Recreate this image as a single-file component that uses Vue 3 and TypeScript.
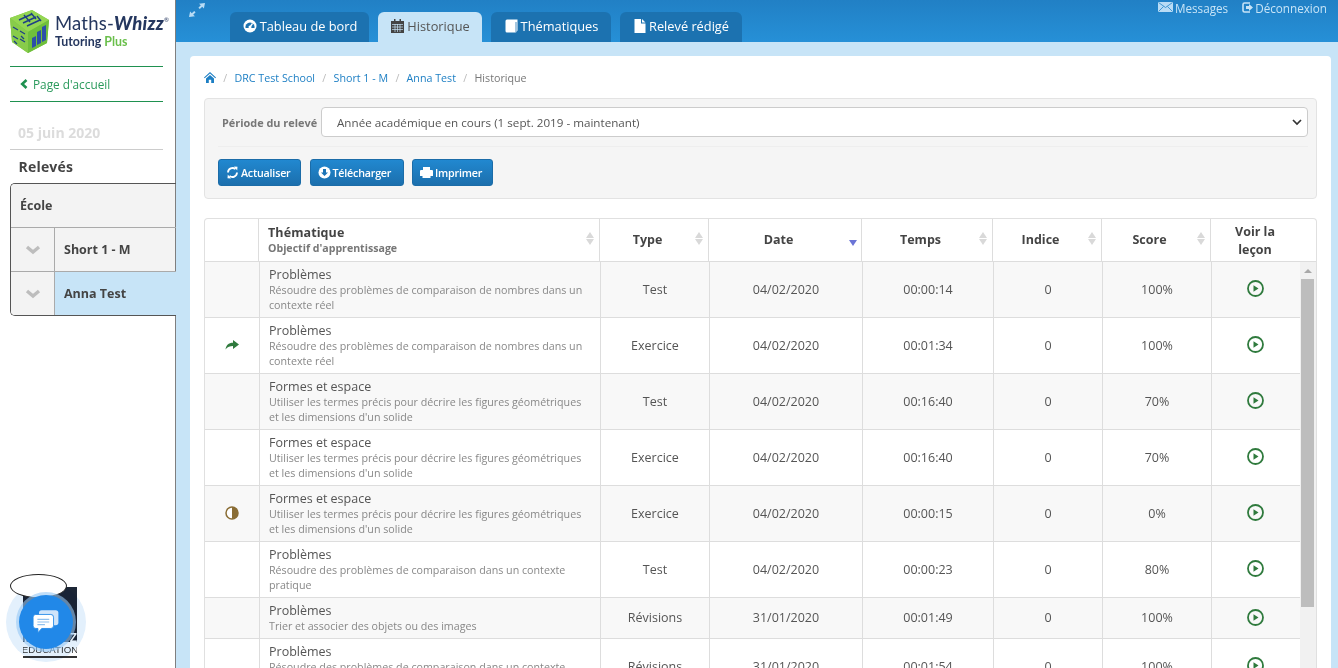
<script setup lang="ts">
interface Row {
  title: string
  desc: string
  type: string
  date: string
  time: string
  score: string
  mark?: 'arrow' | 'half'
  short?: boolean
}

const probA = 'Résoudre des problèmes de comparaison de nombres dans un contexte réel'
const formes = 'Utiliser les termes précis pour décrire les figures géométriques et les dimensions d\'un solide'
const probB = 'Résoudre des problèmes de comparaison dans un contexte pratique'

const rows: Row[] = [
  { title: 'Problèmes', desc: probA, type: 'Test', date: '04/02/2020', time: '00:00:14', score: '100%' },
  { title: 'Problèmes', desc: probA, type: 'Exercice', date: '04/02/2020', time: '00:01:34', score: '100%', mark: 'arrow' },
  { title: 'Formes et espace', desc: formes, type: 'Test', date: '04/02/2020', time: '00:16:40', score: '70%' },
  { title: 'Formes et espace', desc: formes, type: 'Exercice', date: '04/02/2020', time: '00:16:40', score: '70%' },
  { title: 'Formes et espace', desc: formes, type: 'Exercice', date: '04/02/2020', time: '00:00:15', score: '0%', mark: 'half' },
  { title: 'Problèmes', desc: probB, type: 'Test', date: '04/02/2020', time: '00:00:23', score: '80%' },
  { title: 'Problèmes', desc: 'Trier et associer des objets ou des images', type: 'Révisions', date: '31/01/2020', time: '00:01:49', score: '100%', short: true },
  { title: 'Problèmes', desc: probB, type: 'Révisions', date: '31/01/2020', time: '00:01:54', score: '100%' },
]

const headers = [
  { label: 'Type', sort: true },
  { label: 'Date', sort: false, active: true },
  { label: 'Temps', sort: true },
  { label: 'Indice', sort: true },
  { label: 'Score', sort: true },
]
</script>

<template>
  <div class="page">
    <aside class="side">
      <div class="logo">
        <svg class="cube" width="40" height="44" viewBox="0 0 40 44">
          <path d="M22 0 39 10 37 33 18 43 2 32 0 8Z" fill="#7cc242" />
          <path d="M22 0 39 10 18 22 0 8Z" fill="#94d652" />
          <path d="M18 22 39 10 37 33 18 43Z" fill="#6fbf3c" />
          <path d="M0 8 18 22 18 43 2 32Z" fill="#88cc4a" />
          <path d="M9 10l13-6M13 13l13-6M17 16l13-6M14 5l6 7M21 3l5 6M27 6l4 5" stroke="#1f3f86" stroke-width="1.400" fill="none" />
          <path d="M3 17l5 3M10 21l5 3M3 26l5 3M10 29l5 3M11 26l3 3M4 31l3 3" stroke="#1f3f86" stroke-width="1.300" fill="none" />
          <path d="M22 38V28l4-2v10ZM27 35V22l4-2v13ZM32 32V17l4-2v15Z" fill="#2c4fa8" />
        </svg>
        <div class="brand">
          <div class="brand-top">Maths-<b>Whizz</b><sup>®</sup></div>
          <div class="brand-sub">Tutoring <span>Plus</span></div>
        </div>
      </div>
      <div class="home">
        <svg width="8" height="10" viewBox="0 0 8 10"><path d="M6.500 1 2.200 5l4.300 4" fill="none" stroke="#1f9150" stroke-width="2.600" /></svg>
        <span>Page d'accueil</span>
      </div>
      <div class="today">05 juin 2020</div>
      <div class="rel">Relevés</div>
      <div class="tree">
        <div class="tree-row school">École</div>
        <div class="tree-row">
          <span class="chev"><svg width="16" height="10" viewBox="0 0 16 10"><path d="M2 2l6 5 6-5" fill="none" stroke="#bdbdbd" stroke-width="3.400" /></svg></span>
          <span class="tree-label">Short 1 - M</span>
        </div>
        <div class="tree-row">
          <span class="chev"><svg width="16" height="10" viewBox="0 0 16 10"><path d="M2 2l6 5 6-5" fill="none" stroke="#bdbdbd" stroke-width="3.400" /></svg></span>
          <span class="tree-label on">Anna Test</span>
        </div>
      </div>
      <div class="chat-spot">
        <div class="badge-img">
          <em class="z1">I</em><em class="z2">Z</em>
          <span>EDUCATION</span>
        </div>
        <div class="halo"></div>
        <div class="bubble"></div>
        <div class="chat">
          <svg width="28" height="28" viewBox="0 0 26 26">
            <path d="M9 2h13a2.500 2.500 0 0 1 2.500 2.500v9A2.500 2.500 0 0 1 22 16H9a2.500 2.500 0 0 1-2.500-2.500v-9A2.500 2.500 0 0 1 9 2Z" fill="#cfe4fa" />
            <path d="M3.500 6h14a2.500 2.500 0 0 1 2.500 2.500v8a2.500 2.500 0 0 1-2.500 2.500H9l-3.500 4v-4h-2A2.500 2.500 0 0 1 1 16.500v-8A2.500 2.500 0 0 1 3.500 6Z" fill="#fff" stroke="#2188e8" stroke-width="0.800" />
            <path d="M5 10.500h11M5 13h11M5 15.500h7" stroke="#8fc0ee" stroke-width="1.100" />
          </svg>
        </div>
      </div>
    </aside>

    <main class="main">
      <header class="top">
        <svg class="expand" width="18" height="16" viewBox="0 0 18 16">
          <path d="M17 1l-6 .7 1.800 1.500-2.400 2.500 1.400 1.400 2.400-2.400 1.700 1.800ZM1 15l6-.7-1.800-1.500 2.400-2.500L6.200 8.900l-2.400 2.400-1.700-1.800Z" fill="#b9dcf5" />
        </svg>
        <nav class="tabs">
          <a class="tab w1">
            <svg width="14" height="14" viewBox="0 0 14 14"><circle cx="7" cy="7" r="6.500" fill="#fff" /><path d="M2.500 9a4.600 4.600 0 1 1 9 0Z" fill="#1c72b0" /><circle cx="7" cy="8" r="1.500" fill="#fff" /><path d="M7 8l2.500-3.500" stroke="#fff" stroke-width="1.300" /></svg>
            Tableau de bord
          </a>
          <a class="tab w2 active">
            <svg width="13" height="14" viewBox="0 0 13 14"><path d="M0 2h13v12H0Z" fill="#444" /><path d="M3 0h1.500v3H3ZM8.500 0H10v3H8.500Z" fill="#444" /><path d="M1 5.500h11M1 8h11M1 10.500h11M4 5v8M6.500 5v8M9 5v8" stroke="#c7e4f7" stroke-width=".7" /></svg>
            Historique
          </a>
          <a class="tab w3">
            <svg width="13" height="14" viewBox="0 0 13 14"><path d="M2 .5h10.500v11L11 13.500H2A1.500 1.500 0 0 1 .5 12V2A1.500 1.500 0 0 1 2 .5Z" fill="#fff" /><path d="M11 3v10.500" stroke="#1c72b0" stroke-width=".8" /></svg>
            Thématiques
          </a>
          <a class="tab w4">
            <svg width="12" height="14" viewBox="0 0 12 14"><path d="M.5 0H7v4.500h4.500V14H.5ZM8 0l3.500 3.500H8Z" fill="#fff" /></svg>
            Relevé rédigé
          </a>
        </nav>
        <div class="links">
          <a class="link">
            <svg width="15" height="10" viewBox="0 0 15 10"><path d="M0 0h15v10H0Z" fill="#b9dcf5" /><path d="M.5.500l7 5 7-5M.5 9.500 5.500 4.500M14.500 9.500l-5-5" fill="none" stroke="#2285c9" stroke-width=".8" /></svg>
            Messages
          </a>
          <a class="link">
            <svg width="11" height="11" viewBox="0 0 11 11"><path d="M8 1H2.500A1.500 1.500 0 0 0 1 2.500v6A1.500 1.500 0 0 0 2.500 10H8" fill="none" stroke="#c7e4f7" stroke-width="1.600" /><path d="M4 4h3V2l4 3.500L7 9V7H4Z" fill="#c7e4f7" /></svg>
            Déconnexion
          </a>
        </div>
      </header>

      <section class="card">
        <div class="crumbs">
          <svg width="12" height="11" viewBox="0 0 12 11"><path d="M6 0 0 5.500l.7.800L6 1.500l5.300 4.800.7-.8ZM2 6.500 6 3l4 3.500V11H7.200V7.800H4.800V11H2Z" fill="#1d7fc4" /></svg>
          <i>/</i><a>DRC Test School</a><i>/</i><a>Short 1 - M</a><i>/</i><a>Anna Test</a><i>/</i><span>Historique</span>
        </div>

        <div class="filter">
          <div class="period">
            <label>Période du relevé</label>
            <div class="select">
              <span>Année académique en cours (1 sept. 2019 - maintenant)</span>
              <svg width="10" height="7" viewBox="0 0 10 7"><path d="M1 1l4 4 4-4" fill="none" stroke="#333" stroke-width="1.700" /></svg>
            </div>
          </div>
          <div class="btns">
            <button class="btn">
              <svg width="13" height="13" viewBox="0 0 13 13"><path d="M2 6.500a4.500 4.500 0 0 1 7.500-3.300M11 6.500a4.500 4.500 0 0 1-7.500 3.300" fill="none" stroke="#fff" stroke-width="1.800" /><path d="M8 .5l3.500.3-.3 3.700ZM5 12.500l-3.500-.3.300-3.700Z" fill="#fff" /></svg>
              Actualiser
            </button>
            <button class="btn">
              <svg width="13" height="13" viewBox="0 0 13 13"><circle cx="6.500" cy="6.500" r="6" fill="#fff" /><path d="M5 3h3v3.500h2L6.500 10 3 6.500h2Z" fill="#1c74b6" /></svg>
              Télécharger
            </button>
            <button class="btn">
              <svg width="13" height="13" viewBox="0 0 13 13"><path d="M3 1h7v3h2a1 1 0 0 1 1 1v5h-2.500v2h-8v-2H0V5a1 1 0 0 1 1-1h2Z" fill="#fff" /></svg>
              Imprimer
            </button>
          </div>
        </div>

        <div class="table">
          <div class="thead">
            <div class="th c0"></div>
            <div class="th c1">
              <div class="t-a">Thématique</div>
              <div class="t-b">Objectif d'apprentissage</div>
              <span class="sort"><b></b><b class="dn"></b></span>
            </div>
            <div v-for="(h, i) in headers" :key="h.label" class="th center" :class="'c' + (i + 2)">
              {{ h.label }}
              <span v-if="h.sort" class="sort"><b></b><b class="dn"></b></span>
              <span v-if="h.active" class="sorted"></span>
            </div>
            <div class="th center c7 last">Voir la leçon</div>
          </div>
          <div class="tbody">
            <div class="rows">
              <div v-for="(r, i) in rows" :key="i" class="tr" :class="{ odd: i % 2 === 0, short: r.short }">
                <div class="td b0 mid">
                  <svg v-if="r.mark === 'arrow'" width="14" height="10" viewBox="0 0 14 10"><path d="M8 0l6 4.500L8 9V6C5 6 2.500 6.500.5 9.500 1 5.500 3.500 2.800 8 2.800Z" fill="#2f7a3d" /></svg>
                  <svg v-if="r.mark === 'half'" width="14" height="14" viewBox="0 0 14 14"><circle cx="7" cy="7" r="6" fill="#fff" stroke="#8a6d35" stroke-width="1.500" /><path d="M7 1a6 6 0 0 1 0 12Z" fill="#8a6d35" /></svg>
                </div>
                <div class="td b1">
                  <div class="r-title">{{ r.title }}</div>
                  <div class="r-desc">{{ r.desc }}</div>
                </div>
                <div class="td b2 mid">{{ r.type }}</div>
                <div class="td b3 mid">{{ r.date }}</div>
                <div class="td b4 mid">{{ r.time }}</div>
                <div class="td b5 mid">0</div>
                <div class="td b6 mid">{{ r.score }}</div>
                <div class="td b7 mid play">
                  <svg width="17" height="17" viewBox="0 0 17 17"><circle cx="8.500" cy="8.500" r="7.500" fill="none" stroke="#2f7a3d" stroke-width="1.800" /><path d="M6.500 5.200 11.500 8.500l-5 3.300Z" fill="#2f7a3d" /></svg>
                </div>
              </div>
            </div>
            <div class="scroll">
              <span class="up"></span>
              <span class="thumb"></span>
            </div>
          </div>
        </div>
      </section>
    </main>
  </div>
</template>

<style>
html, body { margin: 0; height: 668px; overflow: hidden; }
</style>

<style scoped>
.page { display: flex; height: 668px; overflow: hidden; font-family: "Open Sans", "Liberation Sans", sans-serif; color: #555; background: #fff; }
.side { width: 175px; flex: none; border-right: 1px solid #7f7f7f; padding-top: 10px; box-sizing: content-box; display: flex; flex-direction: column; position: relative; }
.logo { display: flex; height: 46px; padding-left: 10px; gap: 5px; }
.brand { padding-top: 2px; font-family: Lato, "Open Sans", sans-serif; }
.brand-top { font-size: 18.500px; line-height: 22px; color: #25375f; letter-spacing: .2px; white-space: nowrap; }
.brand-top b { font-style: italic; font-weight: 900; }
.brand-top sup { font-size: 6px; vertical-align: 8px; line-height: 0; }
.brand-sub { font-size: 12.400px; line-height: 15px; font-weight: 700; color: #25375f; }
.brand-sub span { color: #6abf4b; }
.home { margin: 10px 12px 0 10px; border-top: 1px solid #1f9150; border-bottom: 1px solid #1f9150; height: 34px; display: flex; align-items: center; gap: 5px; padding-left: 10px; font-size: 11.800px; color: #2a9a5c; }
.today { margin: 0 12px 0 10px; padding: 21px 0 6px 8px; border-bottom: 1px solid #ccc; font-size: 14px; line-height: 20px; font-weight: 700; color: #dcdcdc; }
.rel { padding: 7px 0 6px 18.500px; font-size: 14px; line-height: 20px; font-weight: 700; color: #444; letter-spacing: .2px; }
.tree { margin: 0 -1px 0 10px; border: 1px solid #555; border-right: 0; border-radius: 5px 0 0 5px; overflow: hidden; font-size: 12.500px; font-weight: 700; color: #444; }
.tree-row { height: 43px; display: flex; align-items: stretch; background: #f3f3f3; border-top: 1px solid #aaa; }
.tree-row.school { border-top: 0; align-items: center; padding-left: 9px; border-right: 1px solid #7f7f7f; }
.chev { width: 43px; flex: none; display: flex; align-items: center; justify-content: center; border-right: 1px solid #aaa; }
.tree-label { flex: 1; display: flex; align-items: center; padding-left: 9px; border-right: 1px solid #7f7f7f; }
.tree-label.on { background: #c7e4f7; border-right: 0; }
.chat-spot { position: absolute; left: 0; top: 570px; width: 100px; height: 98px; }
.badge-img { position: absolute; left: 23px; top: 17px; width: 54px; height: 71px; box-sizing: border-box; background: linear-gradient(#1c2636 0 80%, #fff 80%); border-bottom: 2px solid #333; display: flex; align-items: flex-end; justify-content: center; overflow: hidden; }
.badge-img span { font-size: 9.700px; line-height: 12px; color: #333; font-family: "Liberation Sans", sans-serif; white-space: nowrap; }
.badge-img em { position: absolute; top: 45px; font: 700 12px/12px "Liberation Sans", sans-serif; color: #fff; }
.z1 { left: 1px; }
.z2 { right: 0; }
.bubble { position: absolute; left: 10px; top: 4px; width: 57px; height: 24px; box-sizing: border-box; border: 1px solid #222; border-radius: 50%; background: #fff; }
.halo { position: absolute; left: 6px; top: 12px; width: 80px; height: 80px; border-radius: 50%; background: #e3f0fc; mix-blend-mode: multiply; }
.chat { position: absolute; left: 19px; top: 25px; width: 54px; height: 54px; border-radius: 50%; background: #2188e8; box-shadow: 0 0 0 3px rgba(150, 200, 245, .6); display: flex; align-items: center; justify-content: center; }

.main { flex: 1; min-width: 0; background: #c7e4f7; display: flex; flex-direction: column; }
.top { height: 42px; flex: none; background: linear-gradient(#2180c5, #2690d7); display: flex; position: relative; }
.expand { margin: 2px 0 0 12px; flex: none; }
.tabs { display: flex; gap: 9px; margin: 12px 0 0 24px; }
.tab { height: 30px; box-sizing: border-box; border-radius: 6px 6px 0 0; background: #1c72b0; color: #fff; font-size: 12.800px; display: flex; align-items: center; justify-content: center; gap: 3px; white-space: nowrap; padding: 0 0 2px 1px; }
.tab.active { background: #c7e4f7; color: #555; }
.w1 { width: 139px; }
.w2 { width: 104px; }
.w3 { width: 120px; }
.w4 { width: 122px; }
.links { margin-left: auto; display: flex; gap: 14px; padding: 0 11px 0 0; font-size: 11.700px; color: #c7e4f7; }
.link { display: flex; gap: 2px; align-items: flex-start; line-height: 16px; white-space: nowrap; }
.link svg { margin-top: 2px; }

.card { flex: 1; min-height: 0; margin: 14px 7px 0 14px; background: #fff; border-radius: 4px 4px 0 0; padding: 0 14px; overflow: hidden; }
.crumbs { height: 42px; box-sizing: border-box; padding-top: 1px; display: flex; align-items: center; font-size: 10.700px; color: #777; white-space: nowrap; }
.crumbs a { color: #1d7fc4; }
.crumbs i { font-style: normal; color: #bbb; padding: 0 7.300px; }
.filter { height: 101px; box-sizing: border-box; border: 1px solid #e3e3e3; border-radius: 4px; background: #f5f5f5; padding: 8px 8px 0 17px; }
.period { display: flex; align-items: center; gap: 4px; padding-bottom: 9px; height: 30px; box-sizing: content-box; border-bottom: 1px solid #eee; margin-left: -4px; padding-left: 4px; }
.period label { font-size: 10.900px; font-weight: 700; color: #777; white-space: nowrap; width: 95px; flex: none; }
.select { flex: 1; height: 30px; box-sizing: border-box; background: #fff; border: 1px solid #ccc; border-radius: 4px; display: flex; align-items: center; justify-content: space-between; padding: 0 5px 0 15px; font-size: 11.650px; color: #555; }
.btns { display: flex; gap: 8.500px; margin: 12px 0 0 -4px; }
.btn { height: 27px; box-sizing: border-box; border: 1px solid #1b6ca8; border-radius: 3px; background: linear-gradient(#2188d0, #1c6fad); color: #fff; font: 600 10.700px "Open Sans", sans-serif; letter-spacing: -0.2px; display: flex; align-items: center; gap: 2px; padding: 0 0 0 7px; margin: 0; }
.btn:nth-child(1) { width: 83px; }
.btn:nth-child(2) { width: 94px; }
.btn:nth-child(3) { width: 81px; }

.table { margin-top: 19px; border: 1px solid #e0e0e0; border-bottom: 0; border-radius: 4px 4px 0 0; width: 1113px; box-sizing: border-box; }
.thead { display: grid; grid-template-columns: 54px 341px 109px 153px 131px 109px 109px 1fr; height: 42px; border-bottom: 1px solid #ddd; box-sizing: content-box; }
.th { position: relative; border-right: 1px solid #ddd; font-size: 12.500px; font-weight: 700; color: #444; box-sizing: border-box; }
.th.last { border-right: 0; padding: 1px 25px 0 8px; line-height: 18px; text-align: center; }
.center { display: flex; align-items: center; justify-content: center; text-align: center; padding: 0 13px 2px 0; }
.c1 { padding: 5px 0 0 9px; }
.t-a { font-size: 12.500px; line-height: 17px; letter-spacing: .1px; }
.t-b { font-size: 10.600px; line-height: 14px; color: #777; }
.sort { position: absolute; right: 5px; top: 13px; width: 8px; height: 14px; display: flex; flex-direction: column; gap: 1px; }
.sort b { width: 0; height: 0; border: 4px solid transparent; border-top: 0; border-bottom: 6px solid #d9d9d9; }
.sort b.dn { border-bottom: 0; border-top: 6px solid #d9d9d9; }
.sorted { position: absolute; right: 4px; top: 21px; width: 0; height: 0; border: 4px solid transparent; border-bottom: 0; border-top: 6px solid #6b74d6; }

.tbody { display: flex; height: 420px; overflow: hidden; }
.rows { width: 1095px; flex: none; }
.tr { display: grid; grid-template-columns: 55px 341px 109px 153px 131px 109px 109px 88px; height: 56px; box-sizing: border-box; border-bottom: 1px solid #ddd; background: #fff; }
.tr.odd { background: #f8f8f8; }
.tr.short { height: 41px; }
.tr.short .mid { padding-bottom: 2px; }
.td { border-right: 1px solid #ddd; box-sizing: border-box; font-size: 12.500px; color: #555; min-width: 0; }
.b7 { border-right: 0; }
.mid { display: flex; align-items: center; justify-content: center; }
.b1 { padding: 4px 12px 0 9px; }
.b0 svg { margin-top: -1px; }
.play { align-items: flex-start; padding: 18px 2px 0 0; }
.tr.short .play { padding: 11px 2px 0 0; }
.r-title { font-size: 12.500px; line-height: 17px; color: #555; white-space: nowrap; }
.r-desc { font-size: 10.700px; line-height: 15px; color: #888; }
.scroll { width: 16px; flex: none; background: #f1f1f1; position: relative; }
.up { position: absolute; left: 4px; top: 7px; width: 0; height: 0; border: 4px solid transparent; border-top: 0; border-bottom: 4px solid #a8a8a8; }
.thumb { position: absolute; left: 1px; top: 17px; width: 13px; height: 328px; background: #bdbdbd; }
</style>
